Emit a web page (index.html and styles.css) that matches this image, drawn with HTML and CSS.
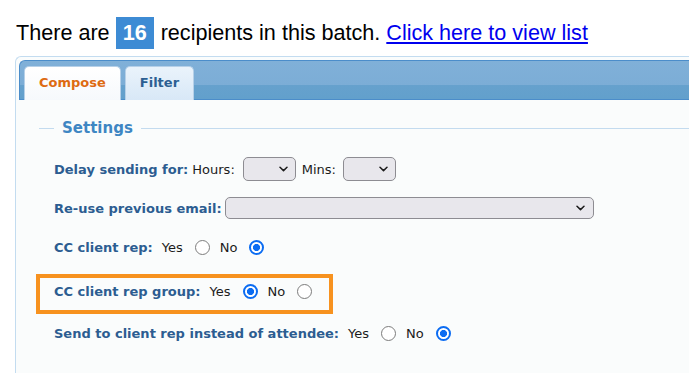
FILE: index.html
```html
<!DOCTYPE html>
<html>
<head>
<meta charset="utf-8">
<link rel="stylesheet" href="styles.css">
</head>
<body>
<div class="intro">There are <span class="badge">16</span> recipients in this batch. <a href="#">Click here to view list</a></div>
<div class="box">
  <div class="tabbar">
    <div class="tab tab-active">Compose</div>
    <div class="tab tab-inactive">Filter</div>
  </div>
  <div class="panel">
    <fieldset class="settings">
      <legend>Settings</legend>
      <div class="rows">
        <div class="row">
          <span class="label label-tight">Delay sending for:</span>
          <span class="txt txt-hours">Hours:</span>
          <span class="sel"><select class="select select-sm"></select><svg class="chev" width="9" height="6" viewBox="0 0 9 6"><path d="M1 1.2 L4.5 4.6 L8 1.2" fill="none" stroke="#1c1c1c" stroke-width="1.5" stroke-linecap="round" stroke-linejoin="round"/></svg></span>
          <span class="txt txt-mins">Mins:</span>
          <span class="sel"><select class="select select-sm"></select><svg class="chev" width="9" height="6" viewBox="0 0 9 6"><path d="M1 1.2 L4.5 4.6 L8 1.2" fill="none" stroke="#1c1c1c" stroke-width="1.5" stroke-linecap="round" stroke-linejoin="round"/></svg></span>
        </div>
        <div class="row">
          <span class="label label-none">Re-use previous email:</span>
          <span class="sel sel-wide"><select class="select select-lg"></select><svg class="chev chev-lg" width="9" height="6" viewBox="0 0 9 6"><path d="M1 1.2 L4.5 4.6 L8 1.2" fill="none" stroke="#1c1c1c" stroke-width="1.5" stroke-linecap="round" stroke-linejoin="round"/></svg></span>
        </div>
        <div class="row">
          <span class="label">CC client rep:</span>
          <span class="opt">Yes</span>
          <input class="radio" type="radio" name="ccrep">
          <span class="opt">No</span>
          <input class="radio" type="radio" name="ccrep" checked>
        </div>
        <div class="row row-hl">
          <span class="label">CC client rep group:</span>
          <span class="opt">Yes</span>
          <input class="radio" type="radio" name="ccgroup" checked>
          <span class="opt">No</span>
          <input class="radio" type="radio" name="ccgroup">
        </div>
        <div class="row">
          <span class="label">Send to client rep instead of attendee:</span>
          <span class="opt">Yes</span>
          <input class="radio" type="radio" name="sendrep">
          <span class="opt">No</span>
          <input class="radio" type="radio" name="sendrep" checked>
        </div>
      </div>
    </fieldset>
  </div>
</div>
</body>
</html>
```
FILE: styles.css
```css
html, body {
  margin: 0;
  overflow: hidden;
  background: #ffffff;
}
body {
  font-family: "DejaVu Sans", Verdana, sans-serif;
  font-size: 13px;
  color: #1b1b1b;
}
.intro {
  margin: 17px 0 0 16px;
  height: 32px;
  font-family: "Liberation Sans", Arial, sans-serif;
  font-size: 21.6px;
  line-height: 32px;
  color: #000;
  white-space: nowrap;
}
.badge {
  display: inline-block;
  padding: 0 7px;
  margin: 0 1px 0 0;
  background: #3d8bd4;
  color: #fff;
  font-weight: bold;
  line-height: 32px;
}
.intro a {
  color: #0000ee;
  text-decoration: underline;
}
.box {
  margin: 7px 0 0 15px;
  height: calc(100vh - 56px);
  box-sizing: border-box;
  border: 1px solid #c3dcf0;
  border-right: 0;
  border-bottom: 0;
  border-radius: 6px 0 0 0;
  padding: 3px 0 0 3px;
  background: #fafcfc;
  overflow: hidden;
}
.tabbar {
  height: 40px;
  box-sizing: border-box;
  border: 1px solid #4b8dca;
  border-right: 0;
  border-radius: 6px 0 0 0;
  background: linear-gradient(#80b0d8 0, #7cadd6 24px, #66a1cd 24px, #62a0cc 100%);
  display: flex;
  align-items: flex-end;
  padding: 0 0 0 4px;
}
.tab {
  height: 34px;
  margin: 0 4px -1px 0;
  box-sizing: border-box;
  padding: 0 14px;
  line-height: 32px;
  font-weight: bold;
  font-size: 13px;
  border: 1px solid #b6d0e8;
  border-bottom: 0;
  border-radius: 5px 5px 0 0;
}
.tab-active {
  background: linear-gradient(#ffffff, #f6f9fc);
  color: #de6b12;
}
.tab-inactive {
  background: linear-gradient(#eaf3fb, #d8e8f7);
  color: #2c5f92;
}
.panel {
  padding-top: 18px;
}
.settings {
  margin: 0 0 0 20px;
  padding: 19px 15px 0;
  border: 0;
  border-top: 1px solid #c3dbef;
  min-width: 0;
}
.settings legend {
  padding: 0 8px;
  font-size: 15px;
  line-height: 20px;
  font-weight: bold;
  color: #3e86c3;
}
.rows {
  display: flex;
  flex-direction: column;
  align-items: flex-start;
  gap: 15px;
}
.row {
  display: flex;
  align-items: center;
  height: 24px;
  white-space: nowrap;
}
.label {
  font-weight: bold;
  color: #2c5d91;
  margin-right: 9px;
}
.label-tight {
  margin-right: 4px;
}
.label-none {
  margin-right: 3px;
}
.txt-hours {
  margin-right: 8px;
}
.txt-mins {
  margin: 0 7px 0 6px;
}
.sel {
  position: relative;
  display: flex;
}
.select {
  appearance: none;
  -webkit-appearance: none;
  margin: 0;
  padding: 0;
  box-sizing: border-box;
  border: 1px solid #8d8c92;
  border-radius: 5px;
  background: #e8e7ec;
}
.select-sm {
  width: 53px;
  height: 24px;
}
.select-lg {
  width: 369px;
  height: 22px;
}
.chev {
  position: absolute;
  right: 8px;
  top: 50%;
  margin-top: -3px;
  pointer-events: none;
}
.chev-lg {
  right: 9px;
}
.opt {
  margin-right: 12px;
}
.radio {
  appearance: none;
  -webkit-appearance: none;
  width: 15px;
  height: 15px;
  margin: 0 10px 0 0;
  box-sizing: border-box;
  border: 1px solid #7c7c7c;
  border-radius: 50%;
  background: #fff;
}
.radio:last-child {
  margin-right: 0;
}
.radio:checked {
  border: 2px solid #0b6cf2;
  background: radial-gradient(circle, #0b6cf2 0 3.3px, #ffffff 3.8px);
}
.row-hl {
  height: 40px;
  box-sizing: border-box;
  border: 4px solid #f7921f;
  padding: 0 17px 6px 14px;
  margin: 0 0 -8px -18px;
}
```
